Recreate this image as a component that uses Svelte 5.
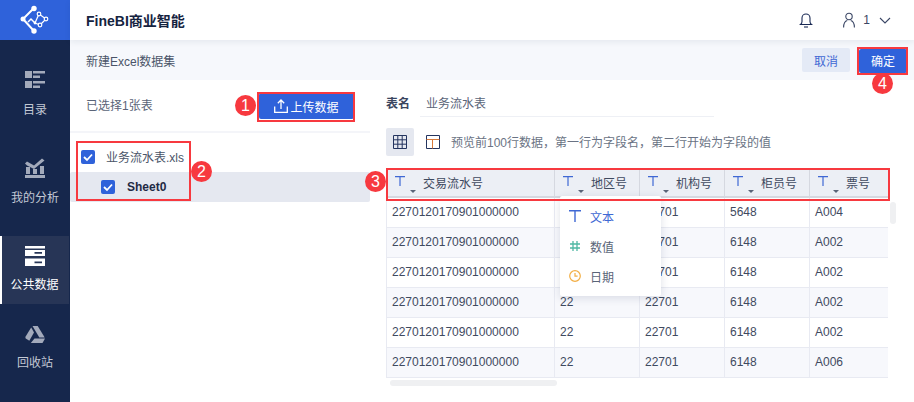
<script lang="ts">
  const nav = [
    { key: 'catalog', label: '目录' },
    { key: 'analysis', label: '我的分析' },
    { key: 'public', label: '公共数据', active: true },
    { key: 'trash', label: '回收站' }
  ];

  const columns = ['交易流水号', '地区号', '机构号', '柜员号', '票号'];

  const rows = [
    ['2270120170901000000', '22', '22701', '5648', 'A004'],
    ['2270120170901000000', '22', '22701', '6148', 'A002'],
    ['2270120170901000000', '22', '22701', '6148', 'A002'],
    ['2270120170901000000', '22', '22701', '6148', 'A002'],
    ['2270120170901000000', '22', '22701', '6148', 'A002'],
    ['2270120170901000000', '22', '22701', '6148', 'A006']
  ];
</script>

<div class="app">
  <aside class="sidebar">
    <div class="logo">
      <svg width="30" height="30" viewBox="0 0 30 30" fill="none" stroke="#fff" stroke-width="1.200">
        <path d="M14 3 3 14 14 26" stroke-width="2" />
        <path d="M8 17 11 14 15 18" stroke-width="1.500" />
        <path d="M19 9 26 14 20 20 15 18Z" />
        <circle cx="14" cy="3.500" r="2.700" fill="#fff" stroke="none" />
        <circle cx="3" cy="14" r="2.500" fill="#fff" stroke="none" />
        <circle cx="14" cy="26" r="2.700" fill="#fff" stroke="none" />
        <circle cx="19" cy="9" r="1.800" fill="#2f62da" />
        <circle cx="26" cy="14" r="1.800" fill="#2f62da" />
        <circle cx="20" cy="20" r="1.800" fill="#2f62da" />
        <circle cx="15" cy="18" r="1.400" fill="#fff" stroke="none" />
      </svg>
    </div>
    {#each nav as item}
      <div class="nav-item {item.key}" class:active={item.active}>
        <svg class="nav-icon" width="20" height="20" viewBox="0 0 20 20">
          {#if item.key === 'catalog'}
            <g fill="#a3aabb">
              <rect x="0" y="1" width="7" height="7" />
              <rect x="8" y="1" width="12" height="2.500" />
              <rect x="8" y="5.500" width="7" height="2.500" />
              <rect x="0" y="11" width="7" height="7" />
              <rect x="8" y="11" width="12" height="2.500" />
              <rect x="8" y="15.500" width="7" height="2.500" />
            </g>
          {:else if item.key === 'analysis'}
            <g fill="#a3aabb">
              <rect x="0" y="17" width="20" height="3" />
              <rect x="1" y="9" width="4" height="7" />
              <rect x="8" y="11" width="4" height="5" />
              <rect x="15" y="8" width="4" height="8" />
              <path d="M0 5.500 2 3.500 9 7.500 17 0.500 19.500 2.500 9 11 2 7.500Z" />
            </g>
          {:else if item.key === 'public'}
            <g fill="#fff">
              <rect x="0" y="0" width="20" height="2.500" />
              <path d="M0 4h20v6H0Zm9.500 2v1.800H17V6Z" fill-rule="evenodd" />
              <path d="M0 12.500h20V20H0Zm9.500 3v1.800H17v-1.800Z" fill-rule="evenodd" />
            </g>
          {:else}
            <g fill="#a3aabb">
              <path d="M7.500 1h5.200l7 11.500H14.300Z" />
              <path d="M6.200 2.500 9 7.500 4.300 15.800 0.700 13.500 0.300 12Z" />
              <path d="M9.500 13.500H20L17.500 18H5.800Z" />
            </g>
          {/if}
        </svg>
        <span>{item.label}</span>
      </div>
    {/each}
  </aside>

  <div class="main">
    <header class="topbar">
      <h1>FineBI商业智能</h1>
      <div class="user">
        <svg class="bell" width="14" height="16" viewBox="0 0 14 16" fill="none" stroke="#1a2a55" stroke-width="1.100">
          <path d="M1.500 12.500c1-.8 1.500-1.700 1.500-3V6a4 4 0 0 1 8 0v3.500c0 1.300.5 2.200 1.500 3Z" />
          <path d="M5 15h4" />
        </svg>
        <svg width="12" height="16" viewBox="0 0 12 16" fill="none" stroke="#3a4665" stroke-width="1.100">
          <circle cx="6" cy="4.500" r="3.200" />
          <path d="M.6 15.500c0-3.800 1.700-6.500 3.700-7M11.400 15.500c0-3.800-1.700-6.500-3.700-7" />
        </svg>
        <span class="user-name">1</span>
        <svg width="12" height="7" viewBox="0 0 12 7" fill="none" stroke="#3a4665" stroke-width="1.100">
          <path d="M1 1 6 6 11 1" />
        </svg>
      </div>
    </header>

    <div class="subbar">
      <span class="subtitle">新建Excel数据集</span>
      <div class="actions">
        <button class="cancel">取消</button>
        <button class="confirm">确定</button>
      </div>
    </div>

    <div class="body">
      <section class="left">
        <div class="left-head">
          <span class="selected">已选择1张表</span>
          <button class="upload">
            <svg width="14" height="14" viewBox="0 0 14 14" fill="none" stroke="#fff" stroke-width="1.300">
              <path d="M.7 7.500v5.800h12.600V7.500M7 10V1.200M3.800 4.200 7 1l3.200 3.200" />
            </svg>
            上传数据
          </button>
        </div>
        <div class="tree">
          <div class="tree-row">
            <span class="check">
              <svg width="14" height="14" viewBox="0 0 14 14" fill="none" stroke="#fff" stroke-width="1.800"><path d="M3 7 6 10 11 4.500" /></svg>
            </span>
            <span class="file">业务流水表.xls</span>
          </div>
          <div class="tree-row sheet">
            <span class="check">
              <svg width="14" height="14" viewBox="0 0 14 14" fill="none" stroke="#fff" stroke-width="1.800"><path d="M3 7 6 10 11 4.500" /></svg>
            </span>
            <span class="sheet-name">Sheet0</span>
          </div>
        </div>
      </section>

      <section class="right">
        <div class="name-row">
          <span class="name-label">表名</span>
          <span class="name-value">业务流水表</span>
        </div>
        <div class="tool-row">
          <span class="tool active">
            <svg width="14" height="14" viewBox="0 0 14 14" fill="none" stroke="#24345f" stroke-width="1">
              <path d="M.5.500h13v13H.5ZM.5 4.800h13M.5 9.200h13M4.800.500v13M9.200.500v13" />
            </svg>
          </span>
          <span class="tool plain">
            <svg width="14" height="14" viewBox="0 0 14 14" fill="none" stroke="#24345f" stroke-width="1">
              <path d="M.5.500h13v13H.5Z" />
              <path d="M.5 4.500h13M6.500 4.500v9" stroke="#d8793a" />
            </svg>
          </span>
          <span class="hint">预览前100行数据，第一行为字段名，第二行开始为字段的值</span>
        </div>

        <div class="table">
          <div class="thead">
            {#each columns as col}
              <div class="th">
                <svg class="type-t" width="10" height="10" viewBox="0 0 10 10" fill="none" stroke="#3f68d4" stroke-width="1.200">
                  <path d="M0 .6h10M5 .6V10" />
                </svg>
                <span class="caret"></span>
                <span class="th-label">{col}</span>
              </div>
            {/each}
          </div>
          {#each rows as row, i}
            <div class="tr" class:alt={i % 2 === 1}>
              {#each row as cell}
                <div class="td">{cell}</div>
              {/each}
            </div>
          {/each}

          <div class="popup">
            <div class="pop-item selected-type">
              <svg width="12" height="12" viewBox="0 0 12 12" fill="none" stroke="#3f68d4" stroke-width="1.400">
                <path d="M0 .8h12M6 .8V12" />
              </svg>
              文本
            </div>
            <div class="pop-item">
              <svg width="12" height="12" viewBox="0 0 12 12" fill="none" stroke="#4fb8a4" stroke-width="1.300">
                <path d="M4 1v10M8 1v10M1 4h10M1 8h10" />
              </svg>
              数值
            </div>
            <div class="pop-item">
              <svg width="12" height="12" viewBox="0 0 12 12" fill="none" stroke="#f2ae45" stroke-width="1.200">
                <circle cx="6" cy="6" r="5.300" />
                <path d="M6 3v3.200h2.600" />
              </svg>
              日期
            </div>
          </div>
        </div>
        <div class="hscroll"></div>
        <div class="vscroll"></div>
      </section>
    </div>
  </div>

  <!-- callout annotations drawn on top of the screenshot -->
  <div class="mark m1"></div>
  <div class="mark m2"></div>
  <div class="mark m3"></div>
  <div class="mark m4"></div>
  <span class="badge b1">1</span>
  <span class="badge b2">2</span>
  <span class="badge b3">3</span>
  <span class="badge b4">4</span>
</div>

<style>
  :global(body) {
    margin: 0;
    background: #fff;
  }

  .app {
    position: relative;
    display: flex;
    width: 914px;
    height: 402px;
    overflow: hidden;
    font-family: "Liberation Sans", "Noto Sans CJK SC", sans-serif;
    font-size: 12px;
    color: #3a4560;
  }

  .sidebar {
    flex: 0 0 70px;
    background: #16274c;
    display: flex;
    flex-direction: column;
  }

  .logo {
    height: 40px;
    background: #2f62da;
    display: flex;
    align-items: center;
    justify-content: center;
  }

  .nav-item {
    box-sizing: border-box;
    padding-top: 30px;
    display: flex;
    flex-direction: column;
    align-items: center;
    color: #c3c8d4;
    font-size: 12px;
    line-height: 16px;
    flex-shrink: 0;
  }

  .nav-item.catalog {
    height: 88px;
  }

  .nav-item.analysis {
    height: 108px;
  }

  .nav-item.active {
    height: 68px;
    padding-top: 10px;
    background: #273556;
    color: #fff;
    box-shadow: inset 2px 0 0 #fff;
    margin-right: 1px;
  }

  .nav-item.trash {
    padding-top: 21px;
  }

  .nav-icon {
    margin-bottom: 12px;
    flex-shrink: 0;
  }

  .active .nav-icon {
    margin-bottom: 11px;
  }

  .trash .nav-icon {
    margin-bottom: 10px;
  }

  .main {
    flex: 1;
    min-width: 0;
    display: flex;
    flex-direction: column;
  }

  .topbar {
    height: 40px;
    flex-shrink: 0;
    padding: 0 23px 0 16px;
    display: flex;
    align-items: center;
    justify-content: space-between;
    background: #fff;
    box-shadow: 0 2px 6px rgba(30, 45, 80, 0.08);
    position: relative;
  }

  h1 {
    margin: 0;
    font-size: 14px;
    font-weight: 700;
    color: #15233f;
  }

  .user {
    display: flex;
    align-items: center;
    color: #3a4665;
  }

  .bell {
    margin-right: 30px;
  }

  .user-name {
    margin: 0 9px 0 8px;
    font-size: 12px;
  }

  .subbar {
    height: 40px;
    flex-shrink: 0;
    padding: 0 7px 0 16px;
    background: #f6f8fc;
    display: flex;
    align-items: center;
    justify-content: space-between;
  }

  .subtitle {
    color: #4a5468;
  }

  .actions {
    display: flex;
    gap: 9px;
    align-items: center;
  }

  button {
    font: inherit;
    border: 0;
    border-radius: 2px;
    height: 24px;
    padding: 0;
  }

  .cancel {
    width: 48px;
    background: #e4eaf6;
    color: #3f68d4;
  }

  .confirm {
    width: 48px;
    background: #2f62da;
    color: #fff;
    margin-top: 1px;
  }

  .body {
    flex: 1;
    min-height: 0;
    display: flex;
  }

  .left {
    flex: 0 0 300px;
    box-sizing: border-box;
  }

  .left-head {
    height: 53px;
    box-sizing: border-box;
    padding: 13px 16px 0 16px;
    border-bottom: 2px solid #f4f5f9;
    display: flex;
    justify-content: space-between;
  }

  .selected {
    line-height: 26px;
    color: #5a6478;
  }

  .upload {
    width: 95px;
    height: 26px;
    background: #2f62da;
    color: #fff;
    display: flex;
    align-items: center;
    justify-content: center;
    gap: 2px;
  }

  .tree {
    padding-top: 9px;
  }

  .tree-row {
    height: 30px;
    display: flex;
    align-items: center;
    padding-left: 11px;
  }

  .tree-row.sheet {
    padding-left: 31px;
    background: #e5e8f0;
    border-radius: 2px;
  }

  .check {
    width: 14px;
    height: 14px;
    border-radius: 2px;
    background: #2f62da;
    display: block;
    flex-shrink: 0;
  }

  .check svg {
    display: block;
  }

  .file {
    margin-left: 11px;
    padding-bottom: 1px;
    color: #4a5468;
  }

  .sheet-name {
    margin-left: 12px;
    font-weight: 700;
    color: #1f2a44;
  }

  .right {
    flex: 1;
    min-width: 0;
    position: relative;
    padding-left: 16px;
  }

  .name-row {
    height: 38px;
    display: flex;
    align-items: flex-start;
    padding-top: 16px;
    box-sizing: border-box;
    line-height: 17px;
  }

  .name-label {
    font-weight: 700;
    color: #3a4560;
  }

  .name-value {
    width: 294px;
    height: 21px;
    margin-left: 10px;
    padding-left: 6px;
    box-sizing: border-box;
    border-bottom: 1px solid #eef0f5;
    color: #5a6478;
  }

  .tool-row {
    height: 28px;
    margin-top: 10px;
    display: flex;
    align-items: center;
  }

  .tool {
    width: 28px;
    height: 28px;
    border-radius: 2px;
    display: flex;
    align-items: center;
    justify-content: center;
    margin-right: 5px;
  }

  .tool.plain {
    margin-right: 4px;
  }

  .tool.active {
    background: #e5e8f0;
  }

  .tool svg {
    display: block;
  }

  .hint {
    padding-bottom: 1px;
    color: #6a7384;
  }

  .table {
    position: relative;
    width: 501px;
    margin-top: 14px;
    border-left: 1px solid #e8eaf2;
  }

  .thead,
  .tr {
    display: grid;
    grid-template-columns: 168px 85px 85px 85px 1fr;
  }

  .thead {
    height: 28px;
    box-sizing: border-box;
    background: #eceff5;
    border-bottom: 2px solid #d5d8e0;
  }

  .th {
    display: flex;
    align-items: center;
    position: relative;
    padding-left: 36px;
    padding-bottom: 1px;
    border-right: 1px solid #d5d8e0;
  }

  .th:last-child {
    border-right: 0;
  }

  .th-label {
    color: #3f4a60;
  }

  .type-t {
    position: absolute;
    left: 8px;
    top: 6px;
  }

  .caret {
    position: absolute;
    left: 23px;
    bottom: 3px;
    border: 3px solid transparent;
    border-top: 3px solid #5a6478;
    border-bottom: 0;
  }

  .tr {
    height: 30px;
    box-sizing: border-box;
    border-bottom: 1px solid #e8eaf2;
    background: #fff;
  }

  .tr.alt {
    background: #f7f8fc;
  }

  .tr:last-of-type {
    border-bottom: 0;
  }

  .td {
    padding-left: 5px;
    line-height: 28px;
    border-right: 1px solid #e8eaf2;
    color: #3f4a5f;
  }

  .td:last-child {
    border-right: 0;
  }

  .popup {
    position: absolute;
    left: 173px;
    top: 26px;
    width: 101px;
    height: 100px;
    background: #fff;
    border-radius: 2px;
    box-shadow: 0 2px 8px rgba(30, 45, 80, 0.14);
    padding-top: 5px;
    box-sizing: border-box;
  }

  .pop-item {
    height: 30px;
    display: flex;
    align-items: center;
    gap: 9px;
    padding-left: 9px;
    color: #5a6478;
  }

  .pop-item.selected-type {
    color: #3f68d4;
  }

  .hscroll {
    position: absolute;
    left: 20px;
    top: 300px;
    width: 167px;
    height: 6px;
    border-radius: 3px;
    background: #eff0f2;
  }

  .vscroll {
    position: absolute;
    left: 520px;
    top: 122px;
    width: 6px;
    height: 22px;
    border-radius: 3px;
    background: #eff0f2;
  }

  .mark {
    position: absolute;
    box-sizing: border-box;
    border: 2px solid #f7393f;
    pointer-events: none;
  }

  .m1 {
    left: 257px;
    top: 92px;
    width: 98px;
    height: 30px;
  }

  .m2 {
    left: 76px;
    top: 141px;
    width: 115px;
    height: 60px;
  }

  .m3 {
    left: 386px;
    top: 168px;
    width: 504px;
    height: 33px;
  }

  .m4 {
    left: 857px;
    top: 47px;
    width: 51px;
    height: 28px;
  }

  .badge {
    position: absolute;
    width: 21px;
    height: 21px;
    border-radius: 50%;
    background: #f7393f;
    color: #fff;
    font-size: 16px;
    line-height: 21px;
    text-align: center;
  }

  .b1 {
    left: 235px;
    top: 95px;
  }

  .b2 {
    left: 191px;
    top: 161px;
  }

  .b3 {
    left: 365px;
    top: 171px;
  }

  .b4 {
    left: 872px;
    top: 73px;
  }
</style>
